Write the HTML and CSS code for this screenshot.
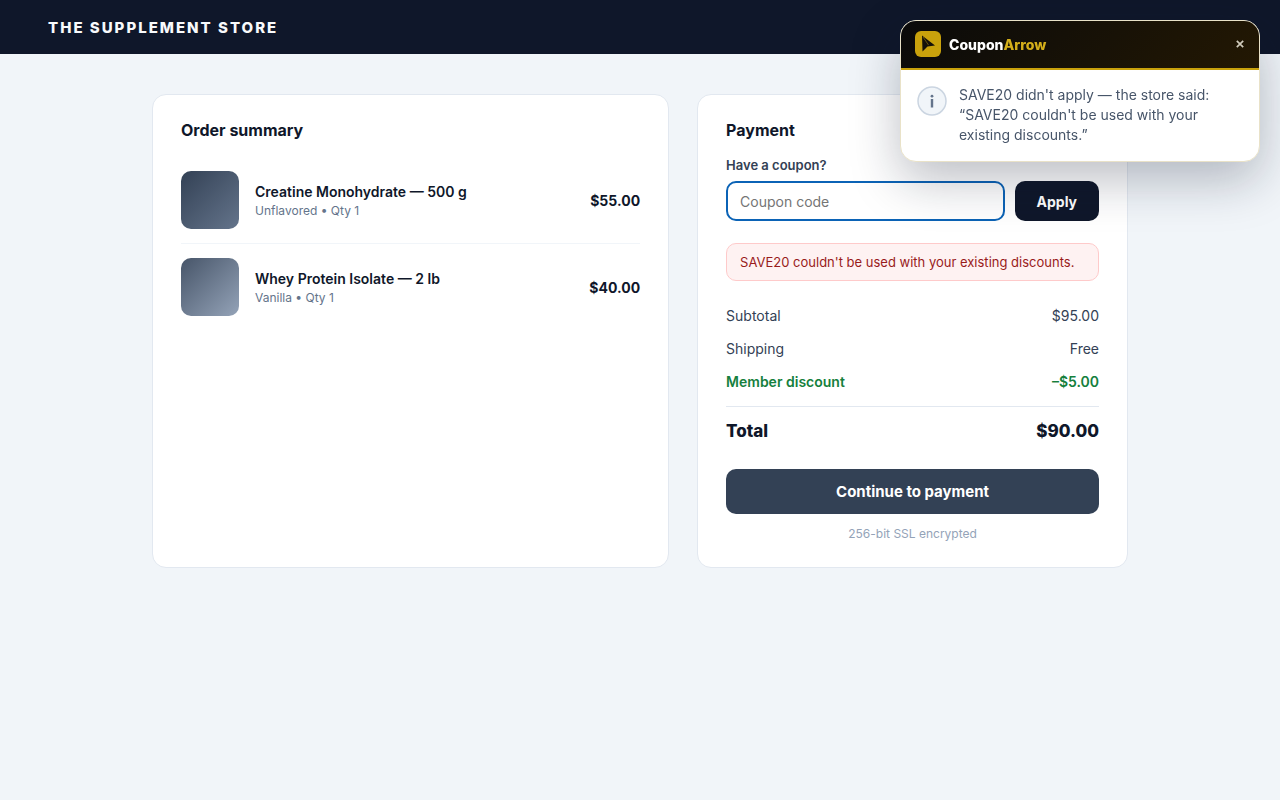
FILE: index.html
```html
<!DOCTYPE html>
<html lang="en">
<head>
  <meta charset="UTF-8">
  <meta name="viewport" content="width=device-width, initial-scale=1.0">
  <title>Checkout - The Supplement Store</title>
  <link rel="stylesheet" href="styles.css">
</head>
<body>
  <header class="site-header">THE SUPPLEMENT STORE</header>

  <main class="checkout">
    <section class="card">
      <h2>Order summary</h2>
      <div class="item">
        <div class="thumb thumb-creatine"></div>
        <div class="item-info">
          <div class="item-name">Creatine Monohydrate — 500 g</div>
          <div class="item-meta">Unflavored • Qty 1</div>
        </div>
        <div class="item-price">$55.00</div>
      </div>
      <div class="item">
        <div class="thumb thumb-whey"></div>
        <div class="item-info">
          <div class="item-name">Whey Protein Isolate — 2 lb</div>
          <div class="item-meta">Vanilla • Qty 1</div>
        </div>
        <div class="item-price">$40.00</div>
      </div>
    </section>

    <section class="card">
      <h2>Payment</h2>
      <label class="coupon-label" for="coupon">Have a coupon?</label>
      <div class="coupon-row">
        <input type="text" id="coupon" class="coupon-input" placeholder="Coupon code">
        <button type="button" class="apply-btn">Apply</button>
      </div>
      <div class="error">SAVE20 couldn't be used with your existing discounts.</div>
      <div class="row"><span>Subtotal</span><span>$95.00</span></div>
      <div class="row"><span>Shipping</span><span>Free</span></div>
      <div class="row discount"><span>Member discount</span><span>–$5.00</span></div>
      <div class="row total"><span>Total</span><span>$90.00</span></div>
      <button type="button" class="pay-btn">Continue to payment</button>
      <p class="secure">256-bit SSL encrypted</p>
    </section>
  </main>

  <aside class="popup">
    <div class="popup-header">
      <svg class="popup-logo" viewBox="0 0 26 26" aria-hidden="true">
        <rect width="26" height="26" rx="6" fill="#c9a20c"/>
        <path d="M7 4.5L20 14.5L12.5 15.5L7.5 20.5Z" fill="#14110a"/>
        <path d="M8 6L13.5 14" stroke="#8a700f" stroke-width="0.7"/>
      </svg>
      <div class="popup-brand">Coupon<span>Arrow</span></div>
      <button type="button" class="popup-close" aria-label="Close">
        <svg viewBox="0 0 8 8" aria-hidden="true"><path d="M0.8 0.8L7.2 7.2M7.2 0.8L0.8 7.2"/></svg>
      </button>
    </div>
    <div class="popup-body">
      <svg class="popup-info" viewBox="0 0 30 30" aria-hidden="true">
        <circle cx="15" cy="15" r="14" fill="#f1f5f9" stroke="#cbd5e1" stroke-width="1.5"/>
        <circle cx="15" cy="10.2" r="1.4" fill="#64748b"/>
        <path d="M15 13V21.4" fill="none" stroke="#64748b" stroke-width="2.4"/>
      </svg>
      <p>SAVE20 didn't apply — the store said: “SAVE20 couldn't be used with your existing discounts.”</p>
    </div>
  </aside>
</body>
</html>
```

FILE: styles.css
```css
* {
  box-sizing: border-box;
}

body {
  margin: 0;
  background: #f1f5f9;
  color: #0f172a;
  font-family: Inter, "Liberation Sans", sans-serif;
}

button,
input {
  font-family: inherit;
}

.site-header {
  padding: 18px 48px 16px;
  background: #0f172a;
  color: #f8fafc;
  font-size: 15px;
  font-weight: 800;
  line-height: 20px;
  letter-spacing: 2px;
}

.checkout {
  display: grid;
  grid-template-columns: 1.2fr 1fr;
  gap: 28px;
  max-width: 1040px;
  margin: 0 auto;
  padding: 40px 32px;
}

.card {
  padding: 25px 28px;
  background: #fff;
  border: 1px solid #e2e8f0;
  border-radius: 14px;
}

.card h2 {
  margin: 0 0 17px;
  font-size: 16px;
  line-height: 20px;
}

.item {
  display: flex;
  align-items: center;
  gap: 16px;
  padding: 14px 0;
}

.item + .item {
  border-top: 1px solid #f1f5f9;
}

.thumb {
  width: 58px;
  height: 58px;
  border-radius: 10px;
}

.thumb-creatine {
  background: linear-gradient(135deg, #334155, #64748b);
}

.thumb-whey {
  background: linear-gradient(135deg, #475569, #94a3b8);
}

.item-info {
  flex: 1;
}

.item-name {
  padding-top: 2px;
  font-size: 14px;
  font-weight: 600;
  line-height: 20px;
}

.item-meta {
  color: #64748b;
  font-size: 12px;
  line-height: 18px;
}

.item-price {
  font-size: 14px;
  font-weight: 700;
}

.coupon-label {
  display: block;
  margin-bottom: 8px;
  color: #334155;
  font-size: 13px;
  font-weight: 600;
  line-height: 16px;
}

.coupon-row {
  display: flex;
  gap: 10px;
  margin-bottom: 22px;
}

.coupon-input {
  flex: 1;
  min-width: 0;
  height: 40px;
  padding: 0 12px;
  background: #fff;
  border: 2px solid #0b63b6;
  border-radius: 10px;
  font-size: 14px;
}

.coupon-input::placeholder {
  color: #757575;
}

.apply-btn {
  padding: 0 22px;
  background: #0f172a;
  border: none;
  border-radius: 10px;
  color: #fff;
  font-size: 14px;
  font-weight: 700;
}

.error {
  margin-bottom: 18px;
  padding: 10px 13px;
  background: #fef2f2;
  border: 1px solid #fecaca;
  border-radius: 10px;
  color: #991b1b;
  font-size: 13px;
  line-height: 16px;
}

.row {
  display: flex;
  justify-content: space-between;
  padding: 8px 0;
  color: #334155;
  font-size: 14px;
  line-height: 17px;
}

.discount {
  color: #15803d;
  font-weight: 600;
}

.total {
  margin-top: 8px;
  padding: 14px 0 0;
  border-top: 1px solid #e2e8f0;
  color: #0f172a;
  font-size: 17px;
  font-weight: 800;
  line-height: 20px;
}

.pay-btn {
  width: 100%;
  height: 45px;
  margin-top: 28px;
  background: #334155;
  border: none;
  border-radius: 10px;
  color: #fff;
  font-size: 15px;
  font-weight: 700;
}

.secure {
  margin: 12px 0 0;
  color: #94a3b8;
  font-size: 12px;
  line-height: 16px;
  text-align: center;
}

.popup {
  position: fixed;
  top: 20px;
  right: 20px;
  width: 360px;
  overflow: hidden;
  background: #fff;
  border: 1px solid #e9e2c8;
  border-radius: 16px;
  box-shadow: 0 18px 50px rgba(15, 23, 42, 0.28);
}

.popup-header {
  display: flex;
  align-items: center;
  gap: 8px;
  padding: 10px 14px 11px;
  background: linear-gradient(135deg, #0a0a0a, #231803);
  border-bottom: 2px solid #c9a20c;
}

.popup-logo {
  width: 26px;
  height: 26px;
}

.popup-brand {
  flex: 1;
  color: #fff;
  font-size: 14px;
  font-weight: 800;
}

.popup-brand span {
  color: #d4af1a;
}

.popup-close {
  display: flex;
  padding: 0 1px;
  background: none;
  border: none;
}

.popup-close svg {
  width: 8px;
  height: 8px;
  stroke: #cfcabb;
  stroke-width: 1.7;
}

.popup-body {
  display: flex;
  gap: 12px;
  padding: 15px 16px 16px;
}

.popup-info {
  flex: none;
  width: 30px;
  height: 30px;
  margin-top: 1px;
}

.popup-body p {
  margin: 0;
  color: #475569;
  font-size: 14px;
  line-height: 20px;
}
```
